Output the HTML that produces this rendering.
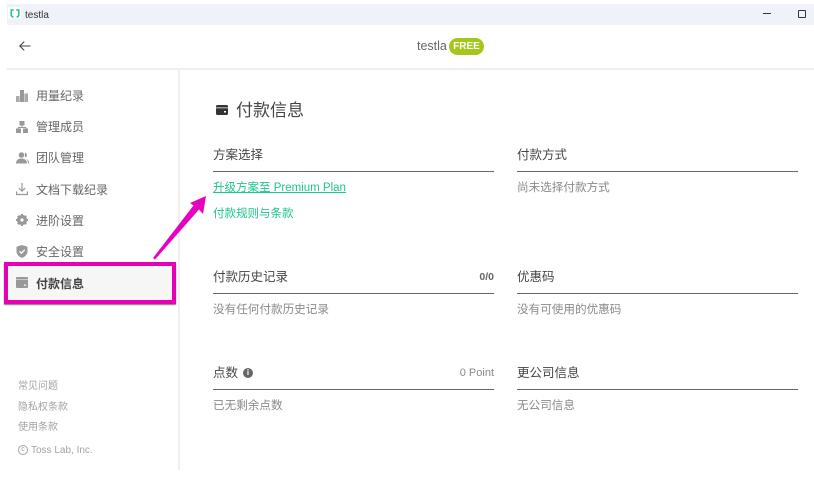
<!DOCTYPE html>
<html><head><meta charset="utf-8">
<style>
html,body{margin:0;padding:0;background:#fff}
body{width:814px;height:487px;position:relative;overflow:hidden;font-family:"Liberation Sans","Noto Sans CJK SC",sans-serif;color:#444}
.a{position:absolute;white-space:nowrap}
.nav{left:36px;font-size:12px;line-height:16px;color:#666}
.h{font-size:12.5px;line-height:18px;color:#444}
.t{font-size:11.6px;line-height:16px;color:#8a8a8a}
.ln{position:absolute;height:1px;background:#666}
.f{left:18px;font-size:10px;line-height:14px;color:#a3a3a3}
svg{position:absolute;overflow:visible}
</style></head><body>
<div class="a" style="left:7px;top:4px;width:807px;height:21px;background:#eff2f8"></div>
<div class="a" style="left:8px;top:7px;width:13px;height:12px;background:#fff"></div>
<svg style="left:10px;top:9px" width="10" height="10" viewBox="0 0 10 10"><path d="M3.800 1H1.200V6.500L3.300 8.400M6.200 1H8.800V6.500L6.700 8.400" fill="none" stroke="#1fc58a" stroke-width="1.500"/></svg>
<div class="a" style="left:25px;top:7.500px;font-size:10px;line-height:15px;color:#333">testla</div>
<div class="a" style="left:763px;top:13px;width:8px;height:1px;background:#333"></div>
<div class="a" style="left:798px;top:10px;width:6px;height:6px;border:1px solid #333;border-radius:1px"></div>

<svg style="left:19px;top:41px" width="12" height="10" viewBox="0 0 12 10"><path d="M11.500 5H1M5.200 .6L.8 5L5.200 9.400" fill="none" stroke="#444" stroke-width="1.100"/></svg>
<div class="a" style="left:417px;top:38px;font-size:12.500px;line-height:16px;color:#666">testla</div>
<div class="a" style="left:449px;top:38px;width:35px;height:17px;border-radius:9px;background:#a3c81a;color:#fff;font-size:10px;font-weight:bold;line-height:17px;text-align:center">FREE</div>
<div class="a" style="left:7px;top:68px;width:807px;height:2px;background:#efefef"></div>
<div class="a" style="left:178px;top:70px;width:2px;height:400px;background:#efefef"></div>

<svg style="left:16px;top:90px" width="12" height="12" viewBox="0 0 12 12" fill="#aaa"><rect x="0" y="6" width="3.600" height="6"/><rect x="4" y="0" width="4" height="12" fill="#999"/><rect x="8.400" y="3.500" width="3.600" height="8.500"/></svg>
<div class="a nav" style="top:88px">用量纪录</div>
<svg style="left:16px;top:121px" width="12" height="12" viewBox="0 0 12 12" fill="#999"><rect x="3.500" y="0" width="5" height="4.500"/><rect x="0" y="7.500" width="5" height="4.500"/><rect x="7" y="7.500" width="5" height="4.500"/><path d="M5.500 4h1v2h3.700v2h-1V7H2.800v1h-1V6h3.700z"/></svg>
<div class="a nav" style="top:119px">管理成员</div>
<svg style="left:16px;top:152px" width="13" height="12" viewBox="0 0 13 12" fill="#999"><circle cx="5.500" cy="3" r="2.800"/><path d="M0 11.500C0 8 2.500 6.500 5.500 6.500S11 8 11 11.500z"/><path d="M9 .5a2.600 2.600 0 0 1 0 5zM10.500 7c1.500.5 2.500 2 2.500 4.500h-1C12 9.500 11.300 8 10.500 7z"/></svg>
<div class="a nav" style="top:150px">团队管理</div>
<svg style="left:16px;top:183px" width="12" height="13" viewBox="0 0 12 13" fill="none" stroke="#999" stroke-width="1.200"><path d="M6 0V8M2.800 5L6 8.200L9.200 5M.6 8.500V11.500H11.400V8.500"/></svg>
<div class="a nav" style="top:182px">文档下载纪录</div>
<svg style="left:16px;top:214px" width="12" height="12" viewBox="0 0 12 12"><circle cx="6" cy="6" r="3.800" fill="none" stroke="#999" stroke-width="2.600"/><path d="M6 0V12M0 6H12M1.800 1.800L10.200 10.200M10.200 1.800L1.800 10.200" stroke="#999" stroke-width="2"/><circle cx="6" cy="6" r="1.600" fill="#fff"/></svg>
<div class="a nav" style="top:213px">进阶设置</div>
<svg style="left:16px;top:245px" width="12" height="13" viewBox="0 0 12 13"><path d="M6 0L11.500 1.800V6.500C11.500 9.500 9 11.800 6 13C3 11.800.5 9.500.5 6.500V1.800z" fill="#999"/><path d="M3.500 6.300L5.400 8.200L8.700 4.800" fill="none" stroke="#fff" stroke-width="1.300"/></svg>
<div class="a nav" style="top:244px">安全设置</div>

<div class="a" style="left:4px;top:262px;width:164px;height:34px;background:#f6f6f6;border:4px solid #e600b4;box-shadow:0 1px 1px #777"></div>
<svg style="left:16px;top:277px" width="12" height="11" viewBox="0 0 12 11" fill="#999"><path d="M1 0H11A1 1 0 0 1 12 1V2.500H0V1A1 1 0 0 1 1 0ZM0 3H12V10A1 1 0 0 1 11 11H1A1 1 0 0 1 0 10ZM8 7.500V8.800H10V7.500Z" fill-rule="evenodd"/></svg>
<div class="a nav" style="top:276px;font-weight:bold;color:#444">付款信息</div>

<svg style="left:0;top:0" width="814" height="487"><path d="M153 258L193.500 205.500L190 203L206 196L203 214L199 209.500L155 259.500Z" fill="#e600c0"/></svg>

<div class="a f" style="top:380px">常见问题</div>
<div class="a f" style="top:401px">隐私权条款</div>
<div class="a f" style="top:421px">使用条款</div>
<div class="a" style="left:18px;top:445px;width:8px;height:8px;border:1px solid #a3a3a3;border-radius:50%;color:#a3a3a3;font-size:7px;line-height:8px;text-align:center">c</div>
<div class="a f" style="left:31px;top:444px;font-size:10px">Toss Lab, Inc.</div>

<svg style="left:216px;top:105px" width="12" height="10" viewBox="0 0 12 10"><path d="M1.500 0H10.500A1.500 1.500 0 0 1 12 1.500V2.500H0V1.500A1.500 1.500 0 0 1 1.500 0ZM0 3.200H12V8.500A1.500 1.500 0 0 1 10.500 10H1.500A1.500 1.500 0 0 1 0 8.500ZM8 6V7.500H10V6Z" fill="#333" fill-rule="evenodd"/></svg>
<div class="a" style="left:236px;top:99px;font-size:17px;line-height:23px;color:#444">付款信息</div>

<div class="a h" style="left:213px;top:146px">方案选择</div>
<div class="ln" style="left:213px;top:171px;width:281px"></div>
<div class="a" style="left:213px;top:180px;font-size:11.500px;line-height:16px;color:#1fc58a;text-decoration:underline">升级方案至 Premium Plan</div>
<div class="a" style="left:213px;top:206px;font-size:11.500px;line-height:16px;color:#1fc58a">付款规则与条款</div>

<div class="a h" style="left:517px;top:146px">付款方式</div>
<div class="ln" style="left:517px;top:171px;width:281px"></div>
<div class="a t" style="left:517px;top:180px">尚未选择付款方式</div>

<div class="a h" style="left:213px;top:268px">付款历史记录</div>
<div class="a" style="right:320px;top:270px;font-size:10.500px;line-height:14px;font-weight:bold;color:#666">0/0</div>
<div class="ln" style="left:213px;top:293px;width:281px"></div>
<div class="a t" style="left:213px;top:302px">没有任何付款历史记录</div>

<div class="a h" style="left:517px;top:268px">优惠码</div>
<div class="ln" style="left:517px;top:293px;width:281px"></div>
<div class="a t" style="left:517px;top:302px">没有可使用的优惠码</div>

<div class="a h" style="left:213px;top:364px">点数</div>
<div class="a" style="left:243px;top:368px;width:10px;height:10px;border-radius:50%;background:#666;color:#fff;font-size:8px;line-height:10px;text-align:center;font-weight:bold">i</div>
<div class="a" style="right:320px;top:366px;font-size:11px;line-height:14px;color:#888">0 Point</div>
<div class="ln" style="left:213px;top:389px;width:281px"></div>
<div class="a t" style="left:213px;top:398px">已无剩余点数</div>

<div class="a h" style="left:517px;top:364px">更公司信息</div>
<div class="ln" style="left:517px;top:389px;width:281px"></div>
<div class="a t" style="left:517px;top:398px">无公司信息</div>
</body></html>
